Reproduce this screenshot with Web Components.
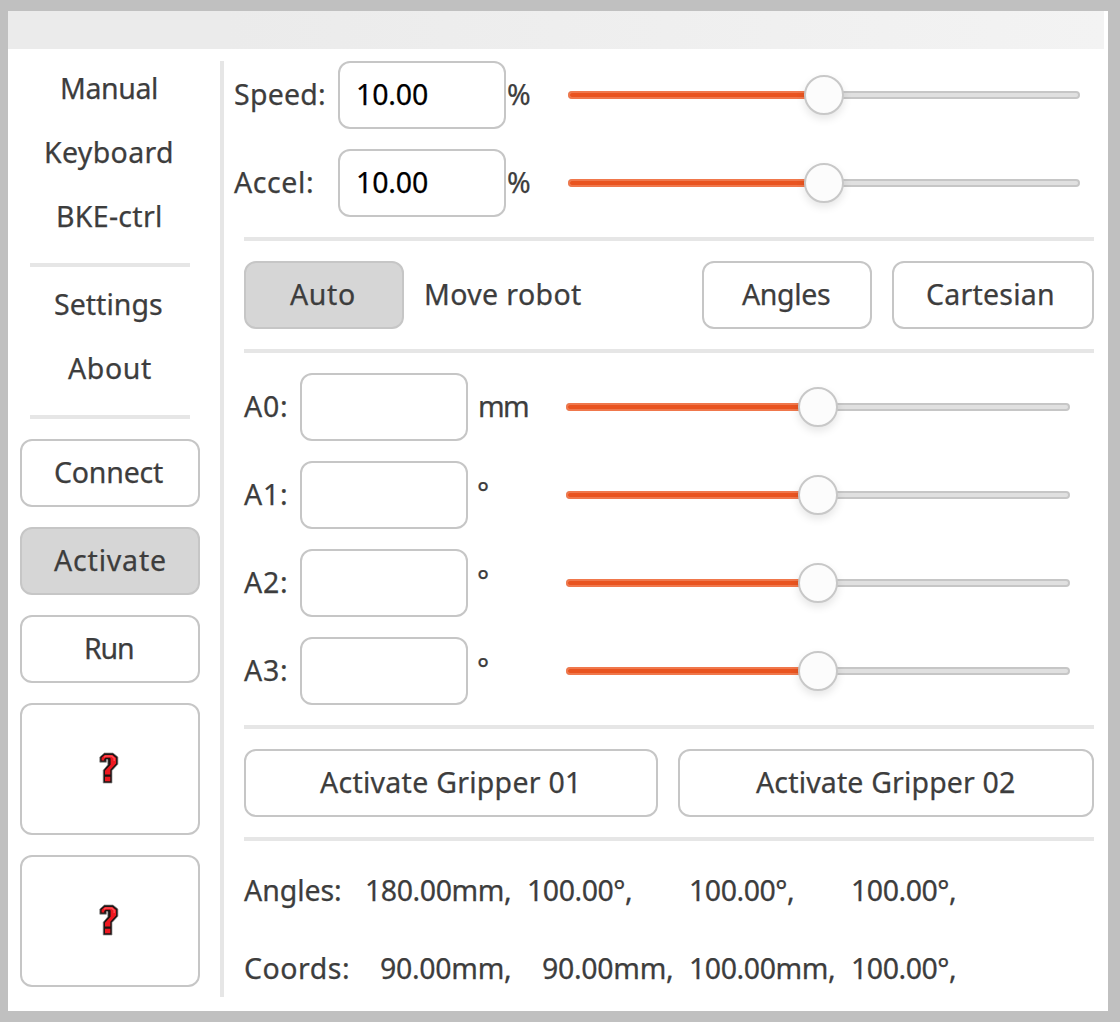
<!DOCTYPE html>
<html lang="en"><head><meta charset="utf-8"><title>Robot control</title>
<style>html,body{margin:0;background:#c0c0c0}body{width:1120px;height:1022px;overflow:hidden}</style></head>
<body><robot-app></robot-app>
<script>
const FONT='28.5px "Noto Sans", "Open Sans", sans-serif';
const ctx=document.createElement('canvas').getContext('2d');
class Base extends HTMLElement{
  constructor(){super();this.attachShadow({mode:'open'});}
  a(n,d=''){return this.getAttribute(n)??d;}
  connectedCallback(){this.shadowRoot.innerHTML=this.view();}
}
// Label whose letters are tracked so its ink fills the width given by "w".
customElements.define('fit-text',class extends Base{
  view(){
    const t=this.a('t'),w=+this.a('w');ctx.font=FONT;
    const m=ctx.measureText(t),ink=m.actualBoundingBoxRight+m.actualBoundingBoxLeft;
    const ls=t.length>1?(w-ink)/(t.length-1):0;
    return `<style>:host{display:block;flex:none;width:${w}px;height:42px;font:${FONT};line-height:40px;color:var(--ink,#3d3d3d);white-space:pre;-webkit-text-stroke:.25px currentColor}
    span{display:block;width:max-content;margin-left:${m.actualBoundingBoxLeft}px;letter-spacing:${ls}px}</style><span>${t}</span>`;
  }
});
customElements.define('rule-line',class extends Base{
  view(){return `<style>:host{display:block;height:4px;background:#e6e6e6;flex:none}</style>`;}
});
customElements.define('nav-link',class extends Base{
  view(){return `<style>:host{display:flex;height:64px;align-items:center;box-sizing:border-box;padding-left:${this.a('p')}px}</style>
  <fit-text t="${this.a('t')}" w="${this.a('w')}"></fit-text>`;}
});
customElements.define('push-button',class extends Base{
  view(){return `<style>:host{display:flex;flex:none;box-sizing:border-box;height:68px;width:${this.a('width')}px;border:2px solid #c6c6c6;border-radius:12px;background:${this.hasAttribute('on')?'#d6d6d6':'#fff'};align-items:center;padding-left:${this.a('p',0)-2}px}
  :host([tall]){height:132px}</style>${this.hasAttribute('t')?`<fit-text t="${this.a('t')}" w="${this.a('w')}"></fit-text>`:'<slot></slot>'}`;}
});
customElements.define('missing-icon',class extends Base{
  view(){return `<style>:host{display:block;width:20px;height:32px;margin-bottom:2px}svg{display:block}</style>
  <svg width="20" height="32" viewBox="0 0 20 32"><path d="M5.4 1H14L18.9 5V12.2L13 18.6V31H4.2V18.2L8.8 12.8V7.6H7.4V10.2H.8V5Z" fill="#1c1414" stroke="#8a8a8a" stroke-width=".7"/>
  <path d="M2.6 8.6V5.8L5.8 2.9H13.4L17.1 5.9V11.5L11.3 17.7V22.4H6V18.7L11.6 12.8V6.6L10.8 5.7H6.6L5.2 7V8.6ZM6 24.8H11.3V29.3H6Z" fill="#ee1820"/><path d="M5 5.2L6.4 4.2H12.8L15.2 6.2V9" fill="none" stroke="#ff5055" stroke-width="1.3"/></svg>`;}
});
customElements.define('value-box',class extends Base{
  view(){return `<style>:host{--ink:#000;display:flex;flex:none;box-sizing:border-box;width:168px;height:68px;border:2px solid #c6c6c6;border-radius:12px;background:#fff;align-items:center;padding-left:18px}</style><slot></slot>`;}
});
customElements.define('range-slider',class extends Base{
  view(){return `<style>:host{display:grid;flex:none;width:${this.a('width')}px;height:40px;align-items:center;justify-items:center}
  .t,.k{grid-area:1/1;box-sizing:border-box}.t{width:100%;height:8px;border:2px solid #c6c6c6;border-radius:4px;background:#e0e0e0}
  .f{justify-self:start;width:50%;border-color:#f0784c;background:#e95420;border-right:0;border-radius:4px 0 0 4px}
  .k{width:40px;height:40px;border:2px solid #c8c8c8;border-radius:50%;background:#fcfcfc;box-shadow:0 4px 8px rgba(0,0,0,.1)}</style>
  <div class="t"></div><div class="t f"></div><div class="k"></div>`;}
});
customElements.define('side-bar',class extends Base{
  view(){return `<style>:host{display:flex;flex-direction:column;width:180px;padding-top:8px;flex:none}
  rule-line{margin:14px 10px 6px}.b{display:flex;flex-direction:column;gap:20px;margin-top:14px}</style>
  <nav-link t="Manual" w="94" p="42"></nav-link><nav-link t="Keyboard" w="126" p="26"></nav-link><nav-link t="BKE-ctrl" w="102" p="38"></nav-link>
  <rule-line></rule-line><nav-link t="Settings" w="107" p="35"></nav-link><nav-link t="About" w="83" p="48"></nav-link><rule-line></rule-line>
  <div class="b"><push-button width="180" t="Connect" w="108" p="35"></push-button><push-button on width="180" t="Activate" w="111" p="34"></push-button>
  <push-button width="180" t="Run" w="47" p="66"></push-button><push-button tall width="180" p="79"><missing-icon></missing-icon></push-button>
  <push-button tall width="180" p="79"><missing-icon></missing-icon></push-button></div>`;}
});
customElements.define('percent-row',class extends Base{
  view(){return `<style>:host{display:flex;height:68px;align-items:center}.l{width:103px;box-sizing:border-box;padding-left:${this.a('p',0)}px}.u{width:60px}</style>
  <div class="l"><fit-text t="${this.a('t')}" w="${this.a('w')}"></fit-text></div><value-box><fit-text t="10.00" w="69"></fit-text></value-box>
  <div class="u" style="padding-left:2px"><fit-text t="%" w="22"></fit-text></div><range-slider width="512"></range-slider>`;}
});
customElements.define('axis-row',class extends Base{
  view(){return `<style>:host{display:flex;height:68px;align-items:center}.l{width:56px}.u{box-sizing:border-box;width:98px;padding-left:${this.a('u')==='mm'?12:10}px;padding-bottom:${this.a('u')==='mm'?0:4}px}</style>
  <div class="l"><fit-text t="${this.a('t')}" w="42"></fit-text></div><value-box></value-box>
  <div class="u"><fit-text t="${this.a('u')}" w="${this.a('uw')}"></fit-text></div><range-slider width="504"></range-slider>`;}
});
customElements.define('readout-row',class extends Base{
  view(){const v=JSON.parse(this.a('v'));
  return `<style>:host{display:grid;height:60px;align-items:center;grid-template-columns:122px 162px 162px 162px 162px}</style>`+
  v.map(([t,w,p])=>`<div style="padding-left:${p}px"><fit-text t="${t}" w="${w}"></fit-text></div>`).join('');}
});
customElements.define('control-panel',class extends Base{
  view(){return `<style>:host{display:flex;flex-direction:column;gap:20px;width:850px;padding:12px 0 0 20px}
  percent-row{margin-left:-9px}.r{display:flex;align-items:center;height:68px}.m{width:276px;padding-left:22px}.g{display:flex;gap:20px}readout-row+readout-row{margin-top:-2px}</style>
  <percent-row t="Speed:" w="89"></percent-row><percent-row t="Accel:" w="78" style="margin-left:-10px;padding-right:1px"></percent-row><rule-line></rule-line>
  <div class="r"><push-button on width="160" t="Auto" w="64" p="46"></push-button><div class="m"><fit-text t="Move robot" w="155"></fit-text></div>
  <div class="g"><push-button width="170" t="Angles" w="88" p="40"></push-button><push-button width="202" t="Cartesian" w="126" p="35"></push-button></div></div>
  <rule-line></rule-line><axis-row t="A0:" u="mm" uw="48"></axis-row><axis-row t="A1:" u="°" uw="9"></axis-row><axis-row t="A2:" u="°" uw="9"></axis-row><axis-row t="A3:" u="°" uw="9"></axis-row>
  <rule-line></rule-line><div class="g"><push-button width="414" t="Activate Gripper 01" w="256" p="76"></push-button><push-button width="416" t="Activate Gripper 02" w="258" p="78"></push-button></div>
  <rule-line></rule-line>
  <readout-row v='[["Angles:",96,0],["180.00mm,",143,1],["100.00°,",102,1],["100.00°,",102,1],["100.00°,",102,1]]'></readout-row>
  <readout-row v='[["Coords:",103,1],["90.00mm,",129,15],["90.00mm,",129,15],["100.00mm,",143,1],["100.00°,",102,1]]'></readout-row>`;}
});
customElements.define('robot-app',class extends Base{
  view(){return `<style>:host{display:block;box-sizing:border-box;width:1120px;height:1022px;padding:11px 12px 11px 8px;background:#c0c0c0}
  .w{height:1000px;background:#fff}.h{height:38px;width:1096px;background:linear-gradient(90deg,#ebebeb,#ebebeb 20%,#f3f3f3)}
  .b{display:flex;padding-left:12px}.v{width:4px;height:936px;margin:12px 0 0 20px;background:#e6e6e6;flex:none}</style>
  <div class="w"><div class="h"></div><div class="b"><side-bar></side-bar><div class="v"></div><control-panel></control-panel></div></div>`;}
});
// Keeps the second percent row's field aligned while its label starts one pixel earlier.
const panel=document.querySelector('robot-app').shadowRoot.querySelector('control-panel').shadowRoot;
const accel=panel.querySelectorAll('percent-row')[1];
accel.shadowRoot.querySelector('.l').style.width='104px';
</script></body></html>
